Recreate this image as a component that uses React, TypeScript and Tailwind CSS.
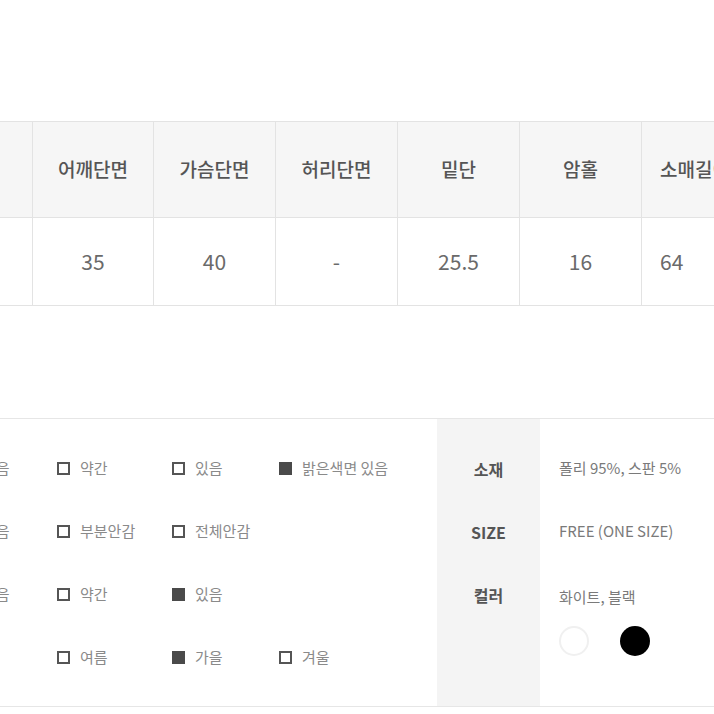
const headers = ["", "어깨단면", "가슴단면", "허리단면", "밑단", "암홀", "소매길이"];
const values = ["", "35", "40", "-", "25.5", "16", "64"];
const widths = ["w-[33px]", "w-[121px]", "w-[122px]", "w-[122px]", "w-[122px]", "w-[122px]", "w-[140px]"];

type Opt = { label: string; on: boolean } | null;

const rows: { lead: string; opts: Opt[] }[] = [
  { lead: "없음", opts: [{ label: "약간", on: false }, { label: "있음", on: false }, { label: "밝은색면 있음", on: true }] },
  { lead: "없음", opts: [{ label: "부분안감", on: false }, { label: "전체안감", on: false }, null] },
  { lead: "없음", opts: [{ label: "약간", on: false }, { label: "있음", on: true }, null] },
  { lead: "", opts: [{ label: "여름", on: false }, { label: "가을", on: true }, { label: "겨울", on: false }] },
];

const Box = ({ on }: { on: boolean }) => (
  <span
    className={
      on
        ? "w-[13px] h-[13px] shrink-0 bg-[#4a4a4a] border-2 border-[#4a4a4a]"
        : "w-[13px] h-[13px] shrink-0 bg-white border-2 border-[#555]"
    }
  />
);

const App = () => {
  return (
    <div className="w-[714px] h-[714px] bg-white overflow-hidden font-['Noto_Sans_CJK_KR','Noto_Sans',sans-serif]">
      <div className="h-[121px]" />
      <div className="flex flex-col border-t border-[#e3e3e3] w-[760px]">
        <div className="flex bg-[#f6f6f6] border-b border-[#e3e3e3] h-[96px]">
          {headers.map((h, i) => (
            <div
              key={i}
              className={`${widths[i]} shrink-0 flex items-center ${i === 6 ? "justify-start pl-[18px]" : "justify-center"} border-r border-[#e3e3e3] text-[19px] text-[#555] font-medium`}
            >
              {h}
            </div>
          ))}
        </div>
        <div className="flex bg-white border-b border-[#e3e3e3] h-[88px]">
          {values.map((v, i) => (
            <div
              key={i}
              className={`${widths[i]} shrink-0 flex items-center ${i === 6 ? "justify-start pl-[18px]" : "justify-center"} border-r border-[#e3e3e3] text-[21px] text-[#6a6a6a]`}
            >
              {v}
            </div>
          ))}
        </div>
      </div>

      <div className="mt-[112px] flex border-t border-b border-[#e6e6e6] h-[289px]">
        <div className="w-[437px] shrink-0 overflow-hidden flex flex-col pt-[18px]">
          {rows.map((r, ri) => (
            <div key={ri} className="h-[63px] flex items-center text-[15px] text-[#8a8a8a]">
              <div className="w-[57px] shrink-0">
                <span className="block ml-[-18px]">{r.lead}</span>
              </div>
              <div className="w-[115px] shrink-0">
                {r.opts[0] && (
                  <span className="flex items-center gap-[10px]">
                    <Box on={r.opts[0].on} />
                    {r.opts[0].label}
                  </span>
                )}
              </div>
              <div className="w-[107px] shrink-0">
                {r.opts[1] && (
                  <span className="flex items-center gap-[10px]">
                    <Box on={r.opts[1].on} />
                    {r.opts[1].label}
                  </span>
                )}
              </div>
              <div className="flex-1">
                {r.opts[2] && (
                  <span className="flex items-center gap-[10px] whitespace-nowrap">
                    <Box on={r.opts[2].on} />
                    {r.opts[2].label}
                  </span>
                )}
              </div>
            </div>
          ))}
        </div>
        <div className="w-[103px] shrink-0 bg-[#f4f4f4] flex flex-col pt-[18px]">
          {["소재", "SIZE", "컬러"].map((l) => (
            <div key={l} className="h-[63px] flex items-center justify-center text-[16px] font-bold text-[#555]">
              {l}
            </div>
          ))}
        </div>
        <div className="flex-1 flex flex-col pt-[18px] pl-[19px] text-[15px] text-[#7a7a7a]">
          <div className="h-[63px] flex items-center">폴리 95%, 스판 5%</div>
          <div className="h-[63px] flex items-center">FREE (ONE SIZE)</div>
          <div className="pt-[23px] flex flex-col gap-[17px]">
            <div>화이트, 블랙</div>
            <div className="flex items-center gap-[31px]">
              <span className="w-[30px] h-[30px] rounded-full bg-white border-2 border-[#f0f0f0]" />
              <span className="w-[30px] h-[30px] rounded-full bg-black" />
            </div>
          </div>
        </div>
      </div>
    </div>
  );
};

export default App;
